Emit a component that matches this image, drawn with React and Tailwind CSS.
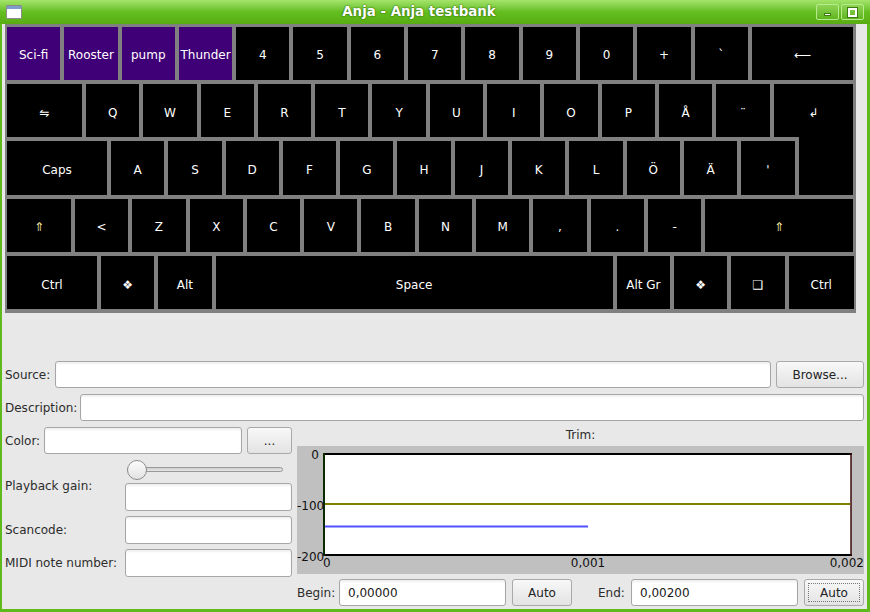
import React from "react";

function Key({ w, children, purple, yellow, extra = "" }) {
  return (
    <div
      className={`${w} shrink-0 h-full flex items-center justify-center pt-[4px] text-[12px] leading-none whitespace-nowrap ${
        purple ? "bg-[#3f0077]" : "bg-black"
      } ${yellow ? "text-[#f2e6a0]" : "text-white"} ${extra}`}
    >
      {children}
    </div>
  );
}

const U = "w-[53.3px]";

function Input({ className = "", value }) {
  return (
    <div
      className={`${className} bg-white border border-[#a6a6a6] rounded-[3px] shadow-[inset_0_2px_2px_rgba(0,0,0,0.06)] flex items-center pl-[8px] text-[12px] text-[#1a1a1a]`}
    >
      {value}
    </div>
  );
}

function Button({ className = "", children, focus }) {
  return (
    <div
      className={`${className} border border-[#a9a9a9] rounded-[3px] bg-gradient-to-b from-[#f8f8f8] to-[#e3e3e3] flex items-center justify-center text-[12px] text-[#222] p-[3px]`}
    >
      <div
        className={`w-full h-full flex items-center justify-center ${
          focus ? "border border-dotted border-[#777]" : ""
        }`}
      >
        {children}
      </div>
    </div>
  );
}

export default function App() {
  return (
    <div className="w-[870px] h-[612px] bg-[#5fbb1c] font-['DejaVu_Sans',sans-serif] flex flex-col overflow-hidden">
      {/* Title bar */}
      <div className="h-[24px] shrink-0 bg-gradient-to-b from-[#a4e46a] via-[#64be1e] to-[#58ac12] flex items-center relative">
        <div className="ml-[6px] w-[16px] h-[14px] border border-[#8a8a8a] bg-white flex flex-col rounded-[1px]">
          <div className="h-[3px] bg-[#7d9cc9]" />
        </div>
        <div className="flex-1 text-center text-white font-bold text-[13.4px] [text-shadow:0_0_2px_#2f6a05,0_0_1px_#2f6a05]">
          Anja - Anja testbank
        </div>
        <div className="flex gap-[2px] mr-[6px]">
          <div className="w-[23px] h-[16px] rounded-[2px] border border-[#b9ea8e] bg-gradient-to-b from-[#8fd454] to-[#5eb51a] flex items-end justify-center pb-[3px]">
            <div className="w-[7px] h-[3px] bg-white border border-[#3d7a10]" />
          </div>
          <div className="w-[23px] h-[16px] rounded-[2px] border border-[#b9ea8e] bg-gradient-to-b from-[#8fd454] to-[#5eb51a] flex items-center justify-center">
            <div className="w-[9px] h-[9px] border-[2px] border-white shadow-[0_0_0_1px_#3d7a10]" />
          </div>
        </div>
      </div>

      {/* Body */}
      <div className="flex-1 ml-[2px] mr-[3px] mb-[3px] bg-[#e8e8e8] flex flex-col">
        {/* Keyboard */}
        <div className="ml-[3px] w-[851px] h-[289px] bg-[#808080] pl-[2px] pt-[2.7px] flex flex-col gap-[4px]">
          <div className="flex gap-[4px] h-[53.3px]">
            <Key w={U} purple>Sci-fi</Key>
            <Key w={U} purple>Rooster</Key>
            <Key w={U} purple>pump</Key>
            <Key w={U} purple>Thunder</Key>
            <Key w={U}>4</Key>
            <Key w={U}>5</Key>
            <Key w={U}>6</Key>
            <Key w={U}>7</Key>
            <Key w={U}>8</Key>
            <Key w={U}>9</Key>
            <Key w={U}>0</Key>
            <Key w={U}>+</Key>
            <Key w={U}>`</Key>
            <Key w="w-[101.1px]">⟵</Key>
          </div>
          <div className="flex gap-[4px] h-[53.3px]">
            <Key w="w-[75px]">⇋</Key>
            <Key w={U}>Q</Key>
            <Key w={U}>W</Key>
            <Key w={U}>E</Key>
            <Key w={U}>R</Key>
            <Key w={U}>T</Key>
            <Key w={U}>Y</Key>
            <Key w={U}>U</Key>
            <Key w={U}>I</Key>
            <Key w={U}>O</Key>
            <Key w={U}>P</Key>
            <Key w={U}>Å</Key>
            <Key w={U}>¨</Key>
            <Key w="w-[79.4px]">↲</Key>
          </div>
          <div className="flex gap-[4px] h-[53.3px]">
            <Key w="w-[100px]">Caps</Key>
            <Key w={U}>A</Key>
            <Key w={U}>S</Key>
            <Key w={U}>D</Key>
            <Key w={U}>F</Key>
            <Key w={U}>G</Key>
            <Key w={U}>H</Key>
            <Key w={U}>J</Key>
            <Key w={U}>K</Key>
            <Key w={U}>L</Key>
            <Key w={U}>Ö</Key>
            <Key w={U}>Ä</Key>
            <Key w={U}>'</Key>
            <div className="w-[54.4px] h-[57.3px] -mt-[4px] bg-black shrink-0" />
          </div>
          <div className="flex gap-[4px] h-[53.3px]">
            <Key w="w-[64px]" yellow>⇑</Key>
            <Key w={U}>&lt;</Key>
            <Key w={U}>Z</Key>
            <Key w={U}>X</Key>
            <Key w={U}>C</Key>
            <Key w={U}>V</Key>
            <Key w={U}>B</Key>
            <Key w={U}>N</Key>
            <Key w={U}>M</Key>
            <Key w={U} extra="text-[10px]">,</Key>
            <Key w={U} extra="text-[10px]">.</Key>
            <Key w={U} extra="text-[10px]">-</Key>
            <Key w="w-[147.7px]" yellow>⇑</Key>
          </div>
          <div className="flex gap-[4px] h-[53.3px]">
            <Key w="w-[90px]">Ctrl</Key>
            <Key w={U}>❖</Key>
            <Key w={U}>Alt</Key>
            <Key w="w-[397.1px]">Space</Key>
            <Key w={U}>Alt Gr</Key>
            <Key w={U}>❖</Key>
            <Key w={U}>❑</Key>
            <Key w="w-[65.4px]">Ctrl</Key>
          </div>
        </div>

        {/* Form */}
        <div className="mt-[48px] px-[3px] flex flex-col text-[12px] text-[#2c2c2c]">
          <div className="flex items-center h-[27px]">
            <div className="w-[50px] whitespace-nowrap">Source:</div>
            <Input className="flex-1 h-full" />
            <Button className="ml-[5px] w-[88px] h-full">Browse...</Button>
          </div>
          <div className="flex items-center h-[27px] mt-[6px]">
            <div className="w-[75px] whitespace-nowrap">Description:</div>
            <Input className="flex-1 h-full" />
          </div>

          <div className="flex mt-[6px] gap-[5px]">
            {/* Left column */}
            <div className="w-[287px] flex flex-col shrink-0">
              <div className="flex items-center h-[27px]">
                <div className="w-[39px] whitespace-nowrap">Color:</div>
                <Input className="w-[198px] h-full" />
                <Button className="ml-[5px] w-[45px] h-full">...</Button>
              </div>
              <div className="flex mt-[5px]">
                <div className="w-[120px] flex items-center pt-[1px] whitespace-nowrap">Playback gain:</div>
                <div className="flex-1 flex flex-col">
                  <div className="h-[21px] flex items-center pl-[2px] relative">
                    <div className="w-[156px] h-[5px] rounded-full border border-[#9a9a9a] bg-gradient-to-b from-[#cfcfcf] to-[#e6e6e6]" />
                    <div className="absolute left-[2px] top-[1px] w-[20px] h-[20px] rounded-full border border-[#8c8c8c] bg-gradient-to-b from-[#fdfdfd] to-[#e2e2e2]" />
                  </div>
                  <Input className="mt-[3px] h-[28px]" />
                </div>
              </div>
              <div className="flex mt-[5px] h-[28px] items-center">
                <div className="w-[120px] whitespace-nowrap">Scancode:</div>
                <Input className="flex-1 h-full" />
              </div>
              <div className="flex mt-[5px] h-[28px] items-center">
                <div className="w-[120px] whitespace-nowrap">MIDI note number:</div>
                <Input className="flex-1 h-full" />
              </div>
            </div>

            {/* Right column */}
            <div className="flex-1 flex flex-col">
              <div className="h-[15px] flex items-center justify-center">Trim:</div>
              <div className="mt-[4px] h-[128px] bg-[#c0c0c0]">
                <svg width="567" height="128" className="block">
                  <rect x="27" y="8" width="527" height="101" fill="#ffffff" />
                  <line x1="28" y1="58" x2="553" y2="58" stroke="#808000" strokeWidth="2" />
                  <line x1="28" y1="80.5" x2="291" y2="80.5" stroke="#5050ff" strokeWidth="2" />
                  <line x1="26" y1="8" x2="555" y2="8" stroke="#000" strokeWidth="2" />
                  <line x1="26" y1="109" x2="555" y2="109" stroke="#000" strokeWidth="2" />
                  <line x1="27" y1="7" x2="27" y2="110" stroke="#0b2a00" strokeWidth="2" />
                  <line x1="554" y1="7" x2="554" y2="110" stroke="#3a0a0a" strokeWidth="1.5" />
                  <g fontFamily="DejaVu Sans, sans-serif" fontSize="12" fill="#111">
                    <text x="22" y="13" textAnchor="end">0</text>
                    <text x="0" y="63.5">-100</text>
                    <text x="0" y="114.5">-200</text>
                    <text x="26" y="121">0</text>
                    <text x="291" y="121" textAnchor="middle">0,001</text>
                    <text x="567" y="121" textAnchor="end">0,002</text>
                  </g>
                </svg>
              </div>
              <div className="mt-[5px] h-[27px] flex items-center">
                <div className="w-[42px] whitespace-nowrap">Begin:</div>
                <Input className="w-[167px] h-full" value="0,00000" />
                <Button className="ml-[6px] w-[60px] h-full">Auto</Button>
                <div className="ml-[26px] w-[33px] whitespace-nowrap">End:</div>
                <Input className="w-[167px] h-full" value="0,00200" />
                <Button className="ml-[6px] w-[60px] h-full" focus>Auto</Button>
              </div>
            </div>
          </div>
        </div>
      </div>
    </div>
  );
}
